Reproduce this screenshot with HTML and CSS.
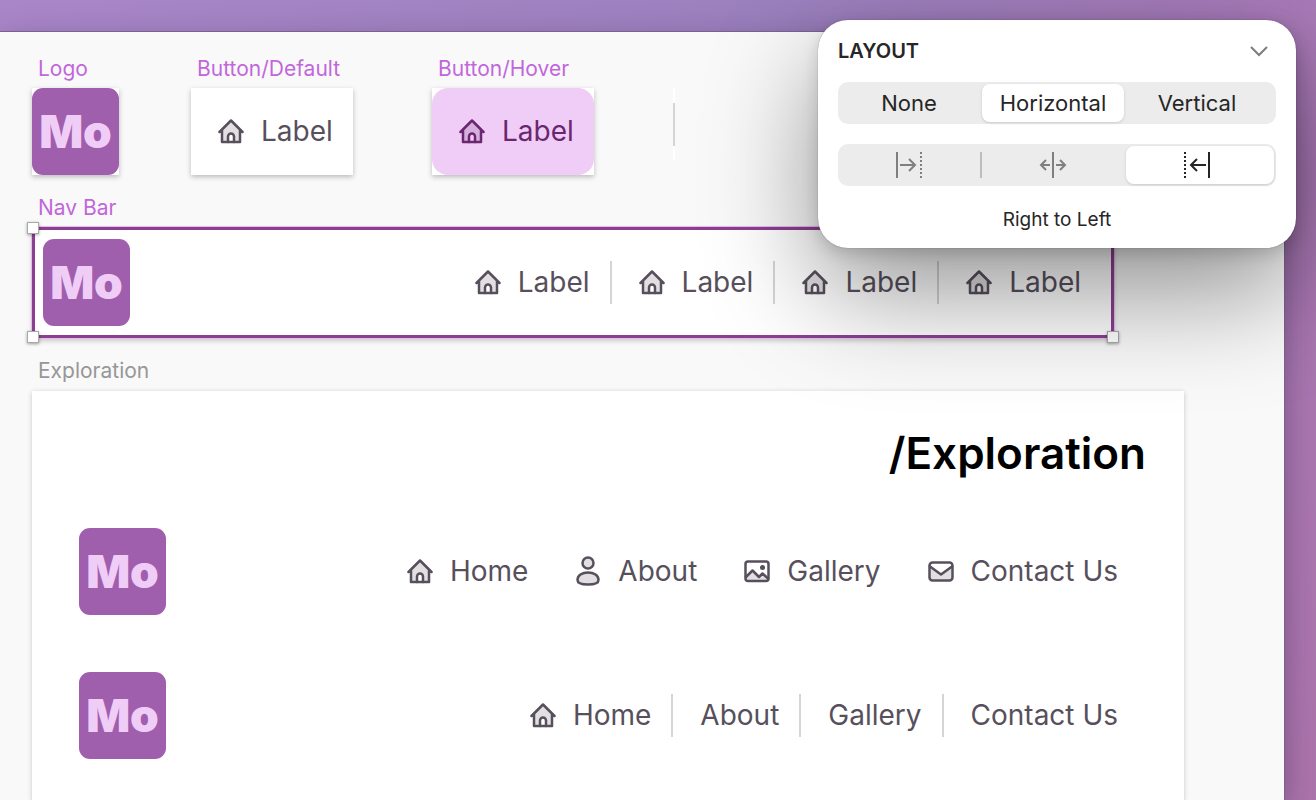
FILE: index.html
```html
<!DOCTYPE html>
<html lang="en">
<head>
<meta charset="utf-8">
<meta name="viewport" content="width=device-width, initial-scale=1">
<title>Nav Bar components</title>
<link rel="stylesheet" href="styles.css">
</head>
<body>
<svg class="sprite" aria-hidden="true">
  <symbol id="home" viewBox="0 0 26 26">
    <path class="tint" d="M4 12 13 3 22 12V23H16V18.500a3 3 0 0 0-6 0V23H4Z"/>
    <path class="line" d="M1.500 14 13 2.500 24.500 14M4 12V24H22V12"/>
    <path class="line" d="M10 24V18.500a3 3 0 0 1 6 0V24"/>
  </symbol>
  <symbol id="person" viewBox="0 0 26 30">
    <circle class="tint line" cx="13" cy="7" r="5.500"/>
    <path class="tint line" d="M2.500 24C2.500 19.500 7 16.500 13 16.500S23.500 19.500 23.500 24C23.500 27 19 28.500 13 28.500S2.500 27 2.500 24Z"/>
  </symbol>
  <symbol id="picture" viewBox="0 0 26 26">
    <path class="tint" d="M2 18 8.500 12 15 18.500 19 15 24 20V22.500H2Z"/>
    <rect class="line" x="1.500" y="3.500" width="23" height="19.500" rx="2.500"/>
    <path class="line" d="M2 19 8.500 12.500 15 19 18.500 15.500 24 20.500"/>
    <circle class="dot" cx="18.500" cy="9.500" r="2.500"/>
  </symbol>
  <symbol id="mail" viewBox="0 0 26 26">
    <path class="tint" d="M2 8 13 17 24 8V22H2Z"/>
    <rect class="line" x="1.500" y="4.500" width="23" height="18" rx="3"/>
    <path class="line" d="M2 8.500 13 16.500 24 8.500"/>
  </symbol>
</svg>

<main class="window">
  <section class="components">
    <figure>
      <figcaption class="tag">Logo</figcaption>
      <div class="sheet"><div class="logo">Mo</div></div>
    </figure>
    <figure>
      <figcaption class="tag">Button/Default</figcaption>
      <div class="sheet"><button class="item" type="button"><svg class="icon"><use href="#home"/></svg>Label</button></div>
    </figure>
    <figure>
      <figcaption class="tag">Button/Hover</figcaption>
      <div class="sheet"><button class="item hover" type="button"><svg class="icon"><use href="#home"/></svg>Label</button></div>
    </figure>
    <div class="rule-sheet"><span class="rule"></span></div>
  </section>

  <h2 class="tag">Nav Bar</h2>
  <div class="navbar selected">
    <div class="logo">Mo</div>
    <nav class="items">
      <button class="item" type="button"><svg class="icon"><use href="#home"/></svg>Label</button>
      <span class="rule"></span>
      <button class="item" type="button"><svg class="icon"><use href="#home"/></svg>Label</button>
      <span class="rule"></span>
      <button class="item" type="button"><svg class="icon"><use href="#home"/></svg>Label</button>
      <span class="rule"></span>
      <button class="item" type="button"><svg class="icon"><use href="#home"/></svg>Label</button>
    </nav>
    <i class="handle top left"></i>
    <i class="handle bottom left"></i>
    <i class="handle bottom right"></i>
  </div>

  <h2 class="tag muted">Exploration</h2>
  <section class="board">
    <h1>/Exploration</h1>
    <div class="navbar">
      <div class="logo">Mo</div>
      <nav class="items">
        <button class="item" type="button"><svg class="icon"><use href="#home"/></svg>Home</button>
        <button class="item" type="button"><svg class="icon tall"><use href="#person"/></svg>About</button>
        <button class="item" type="button"><svg class="icon"><use href="#picture"/></svg>Gallery</button>
        <button class="item" type="button"><svg class="icon"><use href="#mail"/></svg>Contact Us</button>
      </nav>
    </div>
    <div class="navbar">
      <div class="logo">Mo</div>
      <nav class="items">
        <button class="item" type="button"><svg class="icon"><use href="#home"/></svg>Home</button>
        <span class="rule"></span>
        <button class="item" type="button">About</button>
        <span class="rule"></span>
        <button class="item" type="button">Gallery</button>
        <span class="rule"></span>
        <button class="item" type="button">Contact Us</button>
      </nav>
    </div>
  </section>
</main>

<aside class="panel">
  <header class="panel-head">
    <h2>LAYOUT</h2>
    <button class="collapse" type="button" aria-label="Collapse"><svg width="20" height="12" viewBox="0 0 20 12"><path d="M2 2 10 10 18 2"/></svg></button>
  </header>
  <div class="segments">
    <button type="button">None</button>
    <button type="button" class="on" aria-pressed="true">Horizontal</button>
    <button type="button">Vertical</button>
  </div>
  <div class="segments glyphs">
    <button type="button" aria-label="Left to Right"><svg width="28" height="26" viewBox="0 0 28 26"><path d="M2 0V26M5 13H20M14 7 20 13 14 19"/><path class="dots" d="M26 0V26"/></svg></button>
    <button type="button" aria-label="Center"><svg width="28" height="26" viewBox="0 0 28 26"><path d="M14 0V26M11 13H2M7 8 2 13 7 18M17 13H26M21 8 26 13 21 18"/></svg></button>
    <button type="button" class="on" aria-pressed="true" aria-label="Right to Left"><svg width="28" height="26" viewBox="0 0 28 26"><path d="M26 0V26M23 13H8M14 7 8 13 14 19"/><path class="dots" d="M2 0V26"/></svg></button>
  </div>
  <p class="hint">Right to Left</p>
</aside>
</body>
</html>
```
FILE: styles.css
```css
* { box-sizing: border-box; }

body {
  position: relative;
  display: flex;
  height: 100vh;
  margin: 0;
  padding: 32px 32px 0 0;
  overflow: hidden;
  font-family: Inter, "Liberation Sans", sans-serif;
  background: linear-gradient(100deg, #a986c8 0%, #9b80be 55%, #a97ab8 90%, #ad75ac 100%);
}

h1, h2, p, figure { margin: 0; }

button {
  padding: 0;
  border: 0;
  background: none;
  color: inherit;
  font: inherit;
}

.sprite {
  position: absolute;
  width: 0;
  height: 0;
}

.window {
  display: flex;
  flex: 1;
  flex-direction: column;
  min-width: 0;
  padding: 25px 100px 0 32px;
  background: #f9f9f9;
  box-shadow: 0 0 0 1px #7c6290, 0 12px 32px rgba(40, 20, 50, 0.4);
}

.tag {
  padding-left: 6px;
  color: #c266dc;
  font-size: 21px;
  font-weight: 400;
  line-height: 24px;
}

.muted { color: #979797; }

.components {
  display: grid;
  grid-template-columns: 159px 241px 241px auto;
  justify-content: start;
  align-items: start;
  margin-bottom: 21px;
}

.sheet {
  width: max-content;
  margin-top: 7px;
  background: #fff;
  box-shadow: 0 2px 5px rgba(0, 0, 0, 0.25);
}

.rule-sheet {
  width: 2px;
  margin-top: 31px;
  padding: 15px 0 14px;
  background: #fff;
}

.rule {
  display: block;
  flex: none;
  width: 2px;
  height: 43px;
  background: #d5d4d6;
}

.logo {
  flex: none;
  width: 87px;
  height: 87px;
  border-radius: 11px;
  background: #a05fad;
  color: #f0cdf6;
  font-size: 46px;
  font-weight: 900;
  line-height: 87px;
  text-align: center;
}

.item {
  display: flex;
  align-items: center;
  gap: 17px;
  height: 87px;
  padding: 0 20px 2px 27px;
  color: #57505c;
  font-size: 28px;
  line-height: 36px;
  white-space: nowrap;
}

.hover {
  border-radius: 16px;
  background: #f0cdf6;
  color: #6a2770;
}

.icon {
  flex: none;
  width: 26px;
  height: 26px;
}

.tall { height: 30px; }

.line {
  stroke: currentColor;
  stroke-width: 2.500;
  stroke-linejoin: round;
  stroke-linecap: round;
}

.line:not(.tint) { fill: none; }

.tint {
  fill: currentColor;
  fill-opacity: 0.18;
}

.dot { fill: currentColor; }

.navbar {
  display: flex;
  justify-content: space-between;
}

.items {
  display: flex;
  align-items: center;
}

.selected {
  position: relative;
  margin: 7px 70px 21px 0;
  padding: 9px 10px 9px 8px;
  border: 3px solid #8c3f92;
  background: #fff;
  box-shadow: 0 0 0 1px #e3bfe8, 0 3px 5px rgba(0, 0, 0, 0.2);
}

.handle {
  position: absolute;
  width: 12px;
  height: 12px;
  border: 1px solid #a9a9a9;
  background: #fff;
  box-shadow: 0 1px 3px rgba(0, 0, 0, 0.35);
}

.top { top: -8px; }
.bottom { bottom: -8px; }
.left { left: -8px; }
.right { right: -8px; }

.board {
  display: flex;
  flex: 1 0 auto;
  flex-direction: column;
  gap: 57px;
  margin-top: 8px;
  padding: 36px 46px 42px 47px;
  background: #fff;
  box-shadow: 0 1px 5px rgba(0, 0, 0, 0.2);
}

.board h1 {
  margin: 0 -8px -8px 0;
  color: #000;
  font-size: 44px;
  font-weight: 600;
  line-height: 52px;
  text-align: right;
}

.panel {
  position: absolute;
  top: 20px;
  right: 20px;
  width: 478px;
  padding: 18px 20px 15px;
  border-radius: 30px;
  background: #fff;
  color: #262626;
  box-shadow: 0 0 1px rgba(0, 0, 0, 0.5), 0 6px 16px rgba(0, 0, 0, 0.15), 0 44px 110px rgba(0, 0, 0, 0.42);
}

.panel-head {
  display: flex;
  justify-content: space-between;
  align-items: center;
  margin-bottom: 18px;
  padding-right: 7px;
}

.panel-head h2 {
  font-size: 20px;
  font-weight: 600;
  line-height: 26px;
}

.collapse {
  display: flex;
}

.panel svg path {
  fill: none;
  stroke: currentColor;
  stroke-width: 2;
}

.collapse { color: #7d7d7d; }

.segments {
  display: grid;
  grid-template-columns: repeat(3, 1fr);
  height: 42px;
  margin-bottom: 20px;
  padding: 2px 6px 2px 0;
  border-radius: 10px;
  background: #ececec;
  font-size: 22px;
}

.segments button {
  display: flex;
  justify-content: center;
  align-items: center;
  padding-right: 2px;
}

.segments .on {
  margin-right: 2px;
  padding-right: 0;
  border-radius: 8px;
  background: #fff;
  box-shadow: 0 1px 3px rgba(0, 0, 0, 0.15);
}

.glyphs { color: #7f7f7f; }

.glyphs button:first-child {
  background: linear-gradient(#bdbdbd, #bdbdbd) right center / 2px 26px no-repeat;
}

.segments.glyphs .on {
  margin-right: -4px;
  padding-right: 6px;
  color: #262626;
}

.panel svg .dots { stroke-dasharray: 2 2; }

.hint {
  padding-top: 1px;
  font-size: 19px;
  line-height: 26px;
  text-align: center;
}
```
